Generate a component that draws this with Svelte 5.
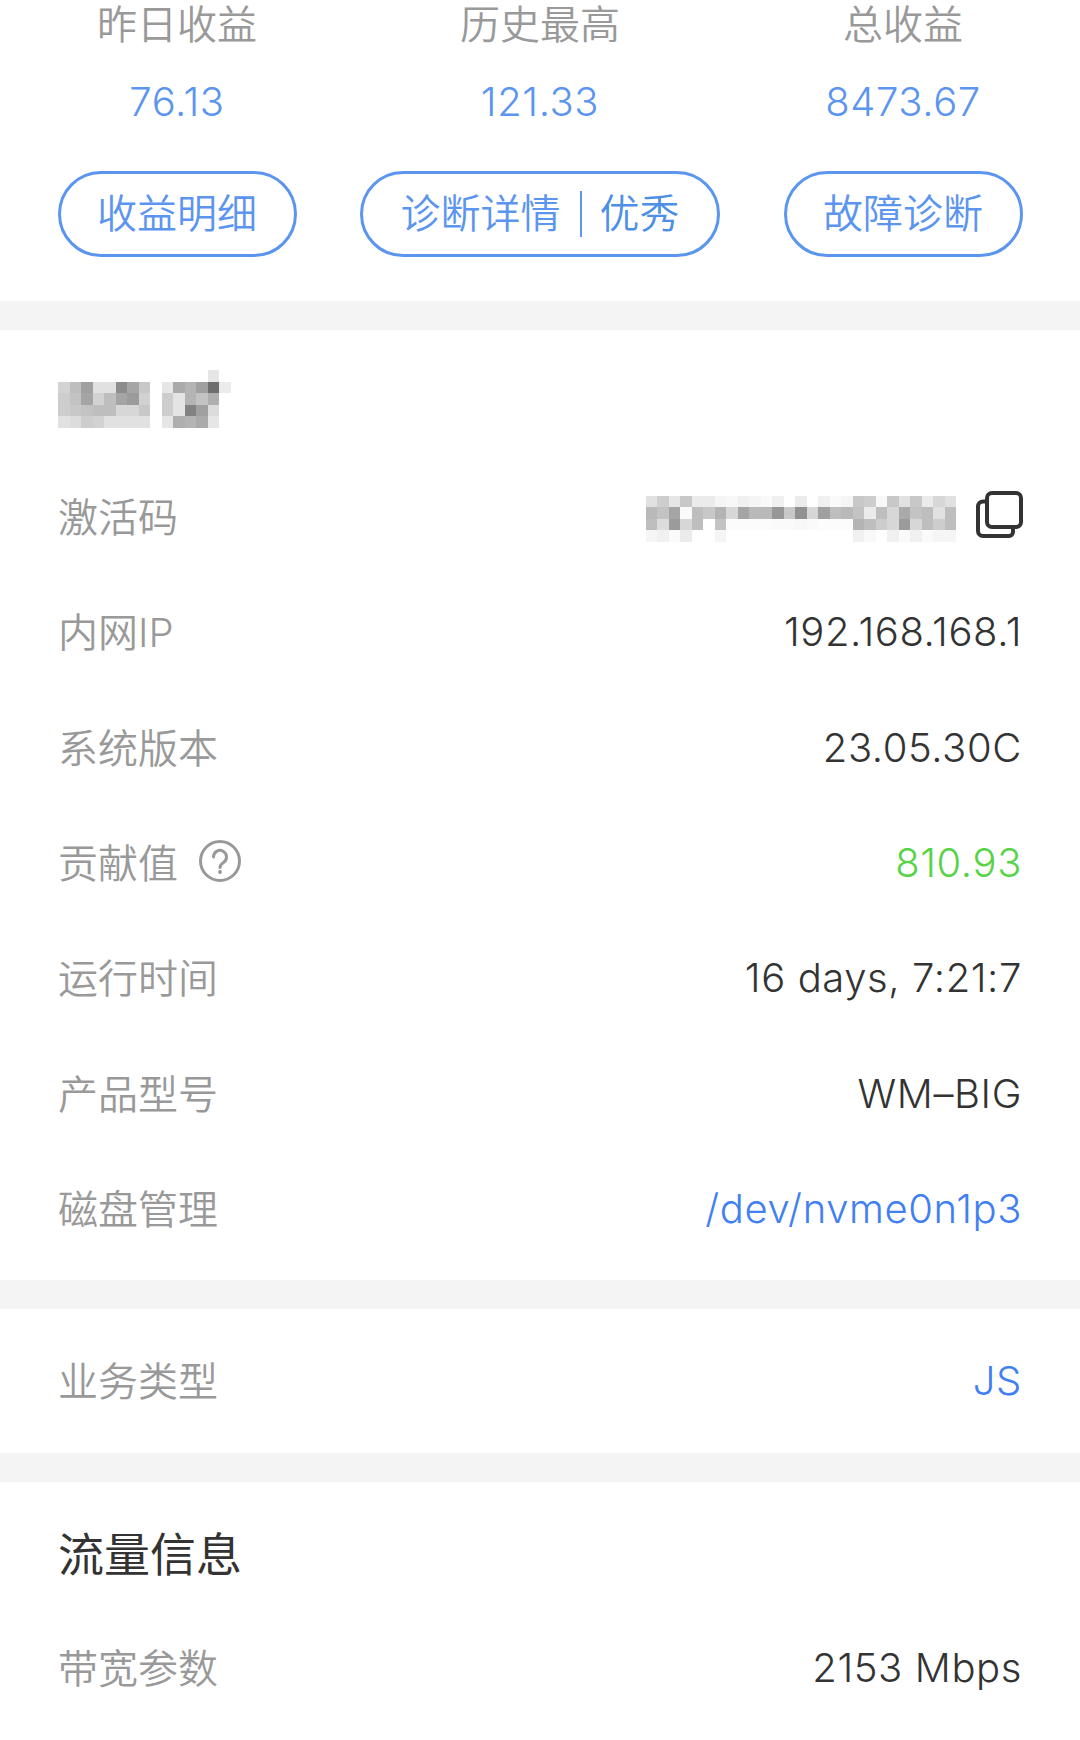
<script>
  const stats = [
    { label: '昨日收益', value: '76.13' },
    { label: '历史最高', value: '121.33' },
    { label: '总收益', value: '8473.67' }
  ];

  // mosaic cells, grey level per pixel block, 0 = empty
  const nameA = [
    [211, 190, 160, 225, 225, 140, 165, 200],
    [205, 195, 165, 210, 190, 165, 155, 210],
    [205, 200, 195, 190, 190, 215, 215, 200],
    [225, 220, 205, 210, 225, 225, 225, 225]
  ];
  const nameB = [
    [0, 0, 0, 0, 230, 0],
    [230, 170, 180, 160, 110, 235],
    [205, 228, 180, 195, 175, 0],
    [205, 228, 130, 160, 220, 0],
    [230, 175, 180, 170, 230, 0]
  ];
  const codeCells = [
    [225, 205, 230, 200, 235, 235, 245, 248, 240, 245, 250, 240, 0, 235, 0, 240, 250, 245, 200, 205, 248, 200, 225, 200, 235, 215, 225],
    [185, 195, 165, 250, 190, 200, 180, 215, 165, 185, 185, 150, 200, 145, 215, 160, 190, 185, 195, 235, 190, 215, 170, 195, 190, 225, 190],
    [190, 220, 155, 215, 190, 0, 195, 252, 252, 252, 252, 250, 250, 248, 250, 252, 252, 252, 180, 190, 205, 215, 155, 215, 190, 205, 190],
    [245, 240, 250, 235, 0, 0, 245, 0, 0, 0, 0, 0, 0, 0, 0, 0, 0, 0, 240, 248, 0, 240, 250, 240, 250, 245, 245]
  ];
  const cell = v => (v ? `rgb(${v},${v},${v})` : 'transparent');

  const rows = [
    { label: '内网IP', value: '192.168.168.1' },
    { label: '系统版本', value: '23.05.30C' },
    { label: '贡献值', value: '810.93', tone: 'green', help: true },
    { label: '运行时间', value: '16 days, 7:21:7' },
    { label: '产品型号', value: 'WM–BIG' },
    { label: '磁盘管理', value: '/dev/nvme0n1p3', tone: 'link' }
  ];
</script>

{#snippet mosaic(cells)}
  <div class="mosaic" style="grid-template-columns: repeat({cells[0].length}, 11.5px)">
    {#each cells.flat() as v}
      <i style="background: {cell(v)}"></i>
    {/each}
  </div>
{/snippet}

<div class="page">
  <section class="summary">
    <div class="stats">
      {#each stats as s}
        <div class="stat">
          <div class="stat-label">{s.label}</div>
          <div class="stat-value">{s.value}</div>
        </div>
      {/each}
    </div>
    <div class="actions">
      <button class="pill">收益明细</button>
      <button class="pill">诊断详情<span class="sep"></span><span class="grade">优秀</span></button>
      <button class="pill">故障诊断</button>
    </div>
  </section>

  <section class="device">
    <div class="device-name">
      <div class="name-a">{@render mosaic(nameA)}</div>
      {@render mosaic(nameB)}
    </div>

    <div class="row">
      <span class="label">激活码</span>
      <div class="code">
        {@render mosaic(codeCells)}
        <svg class="copy" width="47" height="47" viewBox="0 0 47 47" fill="none" stroke="#333" stroke-width="4">
          <rect x="11" y="2" width="34" height="34" rx="5" />
          <path d="M11 10.5H7a5 5 0 0 0-5 5V40a5 5 0 0 0 5 5h26a4 4 0 0 0 4-4v-5" />
        </svg>
      </div>
    </div>

    {#each rows as r}
      <div class="row">
        <span class="label">
          {r.label}
          {#if r.help}
            <svg class="help" width="44" height="44" viewBox="0 0 44 44" fill="none" stroke="#999" stroke-width="3">
              <circle cx="22" cy="22" r="19.5" />
              <path d="M15.5 18a6.500 6.500 0 1 1 10 5.400c-2 1.300-3.500 2.300-3.500 5" stroke-linecap="round" />
              <circle cx="22" cy="33" r="1.200" fill="#999" stroke-width="1.500" />
            </svg>
          {/if}
        </span>
        <span class="value {r.tone ?? ''}">{r.value}</span>
      </div>
    {/each}
  </section>

  <section class="biz">
    <div class="row tall">
      <span class="label">业务类型</span>
      <span class="value link">JS</span>
    </div>
  </section>

  <section class="traffic">
    <h2>流量信息</h2>
    <div class="row">
      <span class="label">带宽参数</span>
      <span class="value">2153 Mbps</span>
    </div>
  </section>
</div>

<style>
  :global(body) {
    margin: 0;
    background: #f4f4f4;
  }

  .page {
    width: 1080px;
    height: 1740px;
    overflow: hidden;
    font-family: Inter, "Noto Sans CJK SC", sans-serif;
    font-weight: 300;
  }

  section {
    background: #fff;
    padding: 0 58px;
    margin-bottom: 29px;
  }

  .summary {
    height: 301px;
    box-sizing: border-box;
    padding: 0 57.5px;
  }

  .stats {
    display: grid;
    grid-template-columns: 239px 360px 239px;
    justify-content: space-between;
  }

  .stat {
    text-align: center;
  }

  .stat-label {
    font-size: 40px;
    line-height: 50px;
    font-weight: 350;
    color: #999;
  }

  .stat-value {
    margin-top: 27px;
    font-size: 40px;
    line-height: 50px;
    letter-spacing: 0.6px;
    color: #5b95f0;
  }

  .actions {
    display: grid;
    grid-template-columns: 239px 360px 239px;
    justify-content: space-between;
    margin-top: 44px;
  }

  .pill {
    height: 86px;
    padding: 0 0 6px;
    border: 3px solid #5b95f0;
    border-radius: 43px;
    background: #fff;
    color: #5b95f0;
    font: inherit;
    font-size: 40px;
    font-weight: 350;
    display: flex;
    align-items: center;
    justify-content: center;
  }

  .sep {
    width: 2px;
    height: 46px;
    margin: 6px 18px 0 19px;
    background: #5b95f0;
  }

  .grade {
    color: #4b90e6;
  }

  .device {
    padding-bottom: 13px;
  }

  .device-name {
    padding-top: 40px;
    height: 90px;
    display: flex;
    gap: 11.5px;
  }

  .name-a {
    margin-top: 11.5px;
  }

  .mosaic {
    display: grid;
    grid-auto-rows: 11.5px;
    align-self: flex-start;
  }

  .row {
    height: 115.3px;
    display: flex;
    align-items: center;
    justify-content: space-between;
  }

  .row.tall {
    height: 144px;
  }

  .label {
    display: flex;
    align-items: center;
    gap: 20px;
    margin-top: -5px;
    font-size: 40px;
    font-weight: 350;
    color: #999;
  }

  .value {
    margin-top: -2px;
    font-size: 40px;
    letter-spacing: 0.6px;
    color: #333;
  }

  .value.green {
    color: #57d347;
  }

  .value.link {
    color: #4080f2;
  }

  .code {
    display: flex;
    align-items: center;
    gap: 20px;
  }

  .code .mosaic {
    margin-top: 2px;
  }

  .copy {
    margin: -6px -1px 0 0;
  }

  .traffic {
    height: 258px;
    margin-bottom: 0;
  }

  h2 {
    margin: 0;
    height: 129px;
    font-size: 46px;
    font-weight: 400;
    line-height: 144px;
    color: #333;
  }
</style>
